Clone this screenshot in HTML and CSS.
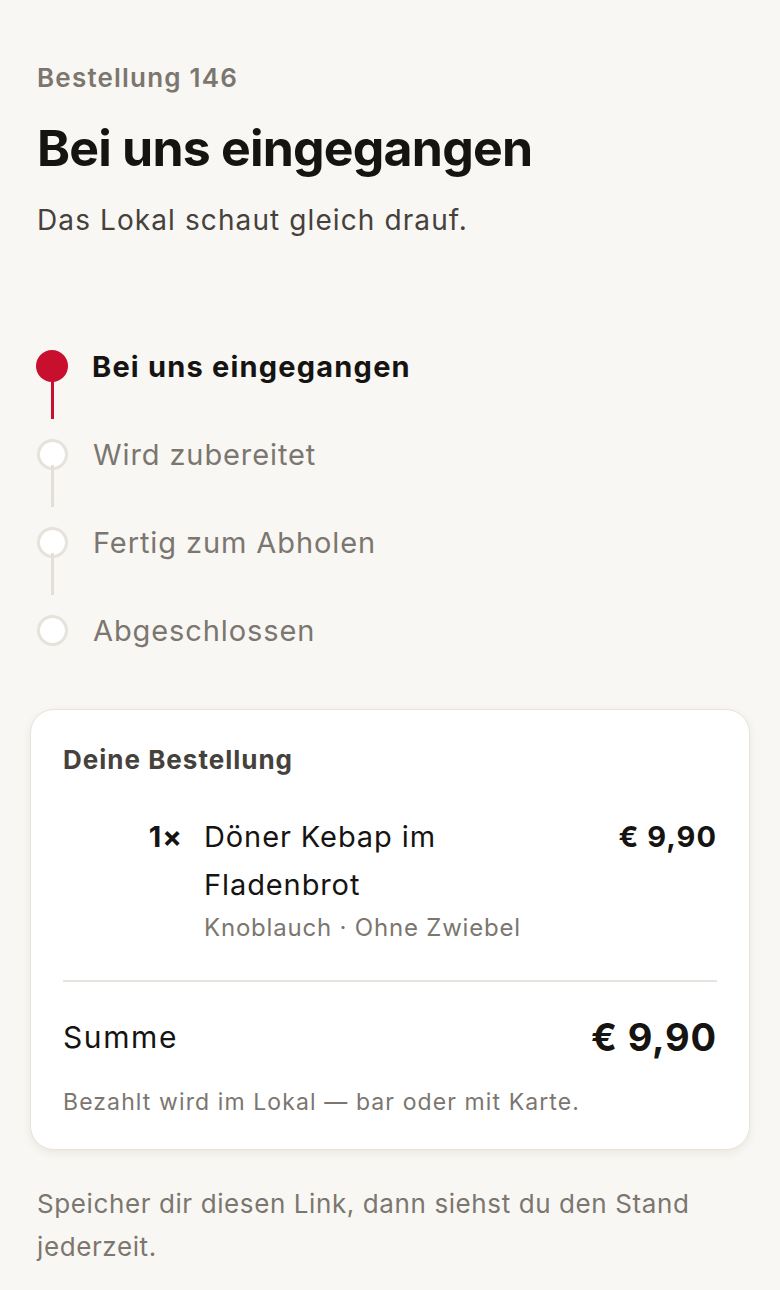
FILE: index.html
```html
<!doctype html>
<html lang="de">
<head>
  <meta charset="UTF-8">
  <meta name="viewport" content="width=device-width, initial-scale=1.0">
  <title>Bestellung 146</title>
  <link rel="stylesheet" href="styles.css">
</head>
<body>
  <main class="page">
    <header class="head">
      <p class="order-no">Bestellung 146</p>
      <h1>Bei uns eingegangen</h1>
      <p class="lead">Das Lokal schaut gleich drauf.</p>
    </header>

    <ol class="steps">
      <li class="step done"><span class="dot"></span><span class="label">Bei uns eingegangen</span></li>
      <li class="step"><span class="dot"></span><span class="label">Wird zubereitet</span></li>
      <li class="step"><span class="dot"></span><span class="label">Fertig zum Abholen</span></li>
      <li class="step last"><span class="dot"></span><span class="label">Abgeschlossen</span></li>
    </ol>

    <section class="card">
      <h2>Deine Bestellung</h2>
      <div class="item">
        <span class="qty">1×</span>
        <div class="item-text">
          <div class="item-name">Döner Kebap im Fladenbrot</div>
          <div class="item-mods">Knoblauch · Ohne Zwiebel</div>
        </div>
        <span class="item-price">€ 9,90</span>
      </div>
      <div class="total">
        <span class="total-label">Summe</span>
        <span class="total-price">€ 9,90</span>
      </div>
      <p class="pay-note">Bezahlt wird im Lokal — bar oder mit Karte.</p>
    </section>

    <p class="footnote">Speicher dir diesen Link, dann siehst du den Stand jederzeit.</p>
  </main>
</body>
</html>
```

FILE: styles.css
```css
body {
  margin: 0;
  background: #f9f7f3;
  color: #161412;
  font-family: Inter, 'Noto Sans', sans-serif;
}
.page {
  padding: 60px 30px 40px 37px;
}
.head p, .head h1 {
  margin: 0;
}
.order-no {
  font-size: 26px;
  font-weight: 600;
  letter-spacing: 1.2px;
  color: #7b766f;
  line-height: 36px;
}
.head h1 {
  font-size: 50px;
  font-weight: 700;
  letter-spacing: -0.8px;
  line-height: 60px;
  margin-top: 22px;
}
.head .lead {
  font-size: 28px;
  letter-spacing: 1.1px;
  color: #45413c;
  line-height: 40px;
  margin-top: 22px;
}
.steps {
  list-style: none;
  margin: 82px 0 0;
  padding: 0;
}
.step {
  position: relative;
  display: flex;
  align-items: center;
  height: 88px;
}
.step::after {
  content: '';
  position: absolute;
  left: 14px;
  top: 55px;
  width: 3px;
  height: 42px;
  background: #e3dfd8;
}
.step.done::after {
  background: #c8102e;
  top: 56px;
  height: 41px;
}
.step.last::after {
  display: none;
}
.dot {
  box-sizing: border-box;
  width: 31px;
  height: 31px;
  border-radius: 50%;
  border: 3px solid #e6e2dc;
  background: #fff;
  flex-shrink: 0;
}
.step.done .dot {
  width: 32px;
  height: 32px;
  margin-left: -1px;
  border: none;
  background: #c8102e;
}
.label {
  margin-left: 25px;
  font-size: 29px;
  letter-spacing: 0.9px;
  color: #7b766f;
}
.step.done .label {
  margin-left: 24px;
  font-weight: 700;
  letter-spacing: 1.2px;
  color: #161412;
}
.card {
  margin: 35px 0 0 -7px;
  background: #fff;
  border: 1px solid #e8e4dd;
  border-radius: 24px;
  box-shadow: 0 3px 8px rgba(60, 50, 40, 0.08);
  padding: 30px 32px 29px 32px;
}
h2 {
  margin: 0;
  font-size: 26px;
  font-weight: 700;
  letter-spacing: 1px;
  color: #45413c;
  line-height: 40px;
}
.item {
  display: flex;
  align-items: flex-start;
  margin-top: 33px;
  padding-bottom: 34px;
  border-bottom: 2px solid #e8e4dd;
}
.qty {
  width: 120px;
  text-align: right;
  font-size: 29px;
  font-weight: 700;
  letter-spacing: 1px;
  line-height: 48px;
  flex-shrink: 0;
}
.item-text {
  flex: 1;
  margin-left: 21px;
}
.item-name {
  font-size: 29px;
  letter-spacing: 0.9px;
  line-height: 48px;
  max-width: 260px;
}
.item-mods {
  font-size: 24px;
  letter-spacing: 0.8px;
  color: #7b766f;
  line-height: 36px;
  margin-top: 1px;
}
.item-price {
  font-size: 29px;
  font-weight: 700;
  letter-spacing: 1px;
  line-height: 48px;
}
.total {
  display: flex;
  justify-content: space-between;
  align-items: center;
  margin-top: 32px;
}
.total-label {
  font-size: 30px;
  letter-spacing: 1.6px;
}
.total-price {
  font-size: 38px;
  font-weight: 700;
  letter-spacing: 0.8px;
}
.pay-note {
  margin: 24px 0 0;
  font-size: 23px;
  letter-spacing: 1.1px;
  color: #7b766f;
  line-height: 36px;
}
.footnote {
  margin: 32px 0 0;
  font-size: 26px;
  letter-spacing: 0.6px;
  color: #7b766f;
  line-height: 43px;
}
```
